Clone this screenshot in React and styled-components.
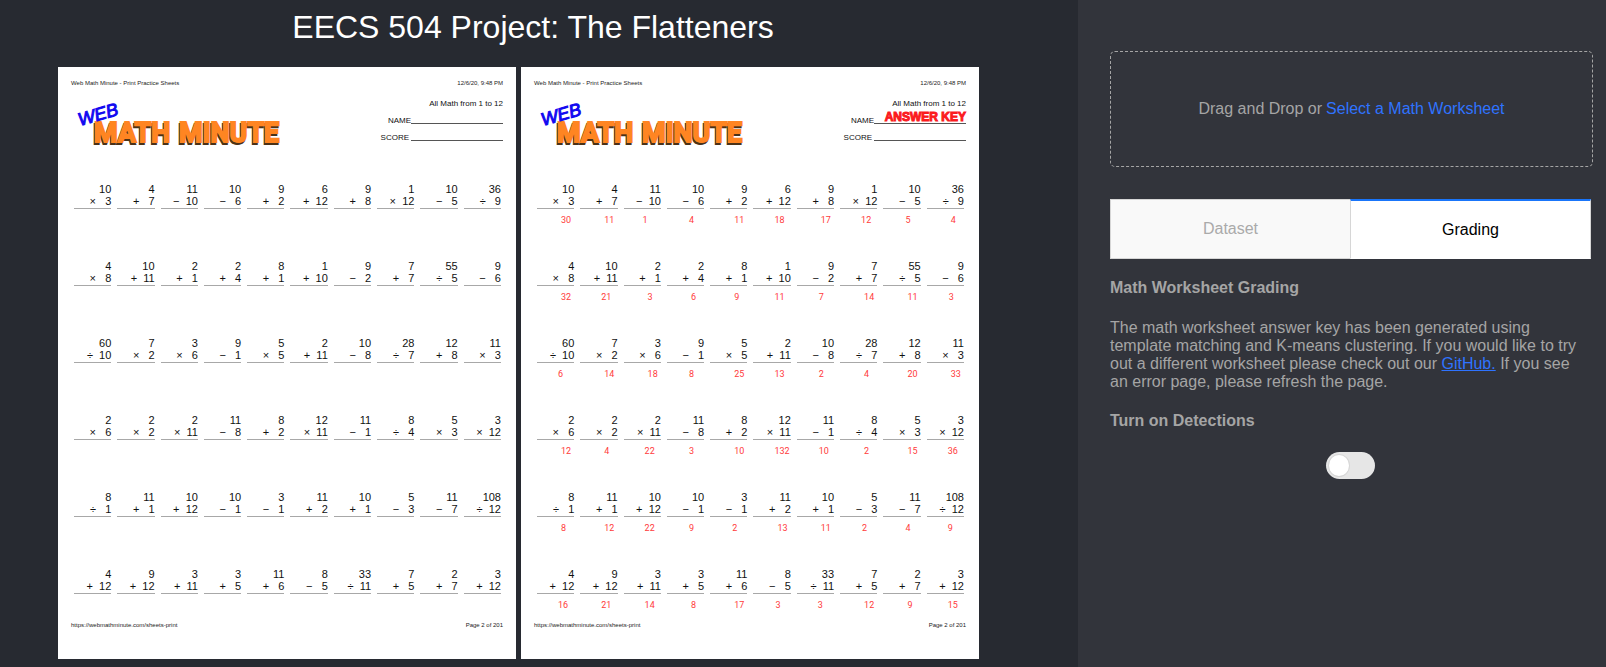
import React, { useState } from "react";
import styled, { createGlobalStyle } from "styled-components";

const GlobalStyle = createGlobalStyle`
  *, *::before, *::after { box-sizing: border-box; }
  body {
    margin: 0;
    background: #272a31;
    color: #a5a5a5;
    font-family: "Liberation Sans", Arial, sans-serif;
    font-size: 16px;
    line-height: 18px;
  }
`;

const Page = styled.div`
  display: grid;
  grid-template-columns: minmax(0, 49fr) minmax(0, 24fr);
  min-height: 100vh;
`;

const Main = styled.main`
  padding-right: 12px;
`;

const Title = styled.h1`
  margin: 0;
  padding: 9px 0 22px;
  color: #fff;
  font-size: 32px;
  font-weight: 400;
  line-height: 36px;
  text-align: center;
`;

const Sheets = styled.div`
  display: flex;
  gap: 5px;
  padding: 0 87px 0 58px;
`;

const Sheet = styled.article`
  flex: 1 1 0;
  min-width: 0;
  padding: 12px 13px 30px;
  background: #fff;
  color: #111;
`;

const PrintLine = styled.div`
  display: flex;
  justify-content: space-between;
  color: #222;
  font-size: 6px;
  line-height: 8px;
`;

const Masthead = styled.header`
  display: flex;
  justify-content: space-between;
  height: 96px;
  padding-top: 8px;
`;

const Logo = styled.svg`
  display: block;
  width: 216px;
  height: 60px;
`;

const LogoWord = styled.text`
  font-family: Roboto, "Liberation Sans", sans-serif;
  font-size: 27px;
  font-weight: 700;
  stroke-width: 2px;
`;

const LogoWeb = styled.text`
  fill: #1208f0;
  stroke: #1208f0;
  stroke-width: 1px;
  font-size: 18px;
  font-style: italic;
`;

const Blanks = styled.div`
  font-size: 8px;
  line-height: 17px;
  text-align: right;
`;

const Blank = styled.div`
  position: relative;
  display: flex;
  justify-content: flex-end;
  gap: ${(p) => p.$gap}px;
`;

const Rule = styled.span`
  width: 92px;
  height: 12px;
  border-bottom: 1px solid #555;
`;

const Stamp = styled.strong`
  position: absolute;
  right: 0;
  bottom: 6px;
  color: #fb1a1e;
  font-size: 12px;
  line-height: 12px;
  white-space: nowrap;
  -webkit-text-stroke: 1px #fb1a1e;
`;

const Problems = styled.div`
  display: grid;
  grid-template-columns: repeat(10, minmax(0, 1fr));
  grid-template-rows: repeat(5, 77px) 53px;
  column-gap: 6px;
  padding: 0 2px 0 3px;
`;

const Problem = styled.div`
  font-size: 11px;
  line-height: 12px;
  text-align: right;
  white-space: pre;
`;

const Operands = styled.div`
  padding-bottom: 1px;
  border-bottom: 1px solid #a8a8a8;
`;

const Answer = styled.div`
  padding-left: ${(p) => p.$start}px;
  color: #ff3b3b;
  font-family: Roboto, sans-serif;
  font-size: 9px;
  line-height: 22px;
  text-align: left;
`;

const Side = styled.aside`
  padding: 51px 13px 0 32px;
  background: #32343b;
`;

const DropZone = styled.div`
  display: flex;
  align-items: center;
  justify-content: center;
  gap: 4px;
  height: 116px;
  border: 1px dashed #a5a5a5;
  border-radius: 5px;
`;

const PickButton = styled.button`
  padding: 0;
  border: 0;
  background: none;
  color: #2f73ff;
  font: inherit;
  cursor: pointer;
`;

const Tabs = styled.div`
  display: flex;
  margin: 32px 2px 20px 0;
`;

const Tab = styled.button`
  flex: 1 1 0;
  height: 60px;
  padding: 0;
  border: 1px solid #d6d6d6;
  border-right-width: ${(p) => (p.$active ? 1 : 0)}px;
  border-top: ${(p) => (p.$active ? "2px solid #1975fa" : "1px solid #d6d6d6")};
  border-bottom-color: ${(p) => (p.$active ? "#fff" : "#d6d6d6")};
  background: ${(p) => (p.$active ? "#fff" : "#f9f9f9")};
  color: ${(p) => (p.$active ? "#000" : "#aaa")};
  font: inherit;
  cursor: pointer;
`;

const Heading = styled.h2`
  display: block;
  margin: 0 0 22px;
  font-size: 16px;
  font-weight: 700;
  line-height: 18px;
`;

const Copy = styled.p`
  margin: 0 0 21px;
  padding-right: 12px;
`;

const Link = styled.a`
  color: #2f73ff;
`;

const SwitchRow = styled.div`
  display: flex;
  justify-content: center;
  padding-right: 2px;
`;

const Switch = styled.input`
  appearance: none;
  display: flex;
  align-items: center;
  width: 49px;
  height: 27px;
  margin: 0;
  padding: 2px;
  border-radius: 14px;
  background: ${(p) => (p.checked ? "#2f73ff" : "#e6e6e6")};
  cursor: pointer;

  &::before {
    content: "";
    width: 22px;
    height: 23px;
    margin-left: ${(p) => (p.checked ? "auto" : "0")};
    border: 1px solid #d6d6d6;
    border-radius: 50%;
    background: #fff;
  }
`;

const ROWS = [
  "10×3=30 4+7=11 11−10=1 10−6=4 9+2=11 6+12=18 9+8=17 1×12=12 10−5=5 36÷9=4",
  "4×8=32 10+11=21 2+1=3 2+4=6 8+1=9 1+10=11 9−2=7 7+7=14 55÷5=11 9−6=3",
  "60÷10=6 7×2=14 3×6=18 9−1=8 5×5=25 2+11=13 10−8=2 28÷7=4 12+8=20 11×3=33",
  "2×6=12 2×2=4 2×11=22 11−8=3 8+2=10 12×11=132 11−1=10 8÷4=2 5×3=15 3×12=36",
  "8÷1=8 11+1=12 10+12=22 10−1=9 3−1=2 11+2=13 10+1=11 5−3=2 11−7=4 108÷12=9",
  "4+12=16 9+12=21 3+11=14 3+5=8 11+6=17 8−5=3 33÷11=3 7+5=12 2+7=9 3+12=15",
];

const PROBLEMS = ROWS.join(" ")
  .split(" ")
  .map((text) => {
    const [, top, op, bottom, answer] = text.match(/(\d+)(\D)(\d+)=(\d+)/);
    return { top, op, bottom, answer };
  });

// An answer starts under its operator: further left for a wide operand or a minus.
const answerStart = ({ op, bottom }) =>
  24 - (bottom.length - 1) * 3 - (op === "−" ? 2 : 0);

function MathMinuteLogo() {
  return (
    <Logo viewBox="0 0 216 60" role="img" aria-label="Web Math Minute">
      <g fill="#4a3218" stroke="#4a3218">
        <LogoWord x="22" y="49">MATH</LogoWord>
        <LogoWord x="107" y="49">MINUTE</LogoWord>
      </g>
      <g fill="#ff8522" stroke="#ff8522">
        <LogoWord x="23" y="47">MATH</LogoWord>
        <LogoWord x="108" y="47">MINUTE</LogoWord>
      </g>
      <LogoWeb x="9" y="31" transform="rotate(-16 9 31)">WEB</LogoWeb>
    </Logo>
  );
}

function Worksheet({ answers }) {
  return (
    <Sheet>
      <PrintLine>
        <span>Web Math Minute - Print Practice Sheets</span>
        <span>12/6/20, 9:48 PM</span>
      </PrintLine>
      <Masthead>
        <MathMinuteLogo />
        <Blanks>
          <div>All Math from 1 to 12</div>
          <Blank $gap={0}>
            NAME
            <Rule />
            {answers && <Stamp>ANSWER KEY</Stamp>}
          </Blank>
          <Blank $gap={2}>
            SCORE
            <Rule />
          </Blank>
        </Blanks>
      </Masthead>
      <Problems>
        {PROBLEMS.map((p, i) => (
          <Problem key={i}>
            <Operands>
              <div>{p.top}</div>
              <div>{p.op + (p.bottom.length > 1 ? "  " : "   ") + p.bottom}</div>
            </Operands>
            {answers && <Answer $start={answerStart(p)}>{p.answer}</Answer>}
          </Problem>
        ))}
      </Problems>
      <PrintLine>
        <span>https://webmathminute.com/sheets-print</span>
        <span>Page 2 of 201</span>
      </PrintLine>
    </Sheet>
  );
}

export default function App() {
  const [tab, setTab] = useState("Grading");
  const [detections, setDetections] = useState(false);
  return (
    <Page>
      <GlobalStyle />
      <Main>
        <Title>EECS 504 Project: The Flatteners</Title>
        <Sheets>
          <Worksheet />
          <Worksheet answers />
        </Sheets>
      </Main>
      <Side>
        <DropZone>
          <span>Drag and Drop or</span>
          <PickButton type="button">Select a Math Worksheet</PickButton>
        </DropZone>
        <Tabs role="tablist">
          {["Dataset", "Grading"].map((name) => (
            <Tab
              key={name}
              type="button"
              role="tab"
              aria-selected={tab === name}
              $active={tab === name}
              onClick={() => setTab(name)}
            >
              {name}
            </Tab>
          ))}
        </Tabs>
        <Heading>Math Worksheet Grading</Heading>
        <Copy>
          The math worksheet answer key has been generated using template
          matching and K-means clustering. If you would like to try out a
          different worksheet please check out our{" "}
          <Link href="https://github.com">GitHub.</Link> If you see an error
          page, please refresh the page.
        </Copy>
        <Heading as="label" htmlFor="detections">
          Turn on Detections
        </Heading>
        <SwitchRow>
          <Switch
            id="detections"
            type="checkbox"
            role="switch"
            checked={detections}
            onChange={(e) => setDetections(e.target.checked)}
          />
        </SwitchRow>
      </Side>
    </Page>
  );
}
